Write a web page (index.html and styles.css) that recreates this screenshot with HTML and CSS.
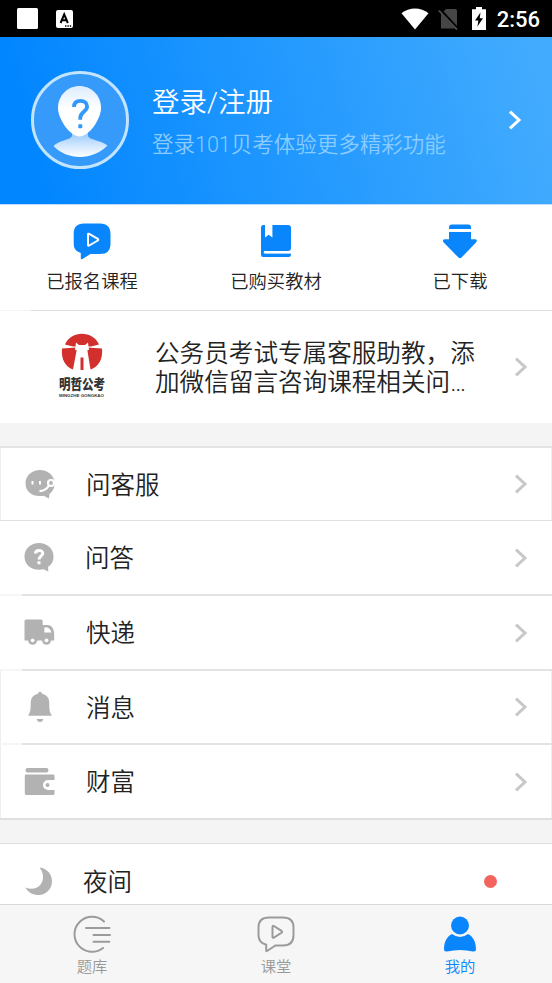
FILE: index.html
```html
<!DOCTYPE html>
<html lang="zh-CN">
<head>
<meta charset="utf-8">
<title>我的</title>
<link rel="stylesheet" href="styles.css">
</head>
<body>
<svg class="defs" aria-hidden="true">
  <symbol id="chevron" viewBox="0 0 14 20"><path d="M2 1.6 11 10 2 18.4" fill="none" stroke="currentColor" stroke-width="3"/></symbol>
</svg>
<div class="app">
  <div class="status">
    <svg class="st-square" viewBox="0 0 21 21"><rect width="21" height="21" rx="1.5" fill="#fff"/></svg>
    <svg class="st-input" viewBox="0 0 17 18"><rect width="17" height="18" rx="2" fill="#fff"/><path d="M4.6 13 8.2 4.4 11.8 13M6 10.2h4.6" fill="none" stroke="#000" stroke-width="2"/><path d="M9 16h1.4M11.4 16h1.4M13.8 16h1.4" stroke="#000" stroke-width="1.3"/></svg>
    <span class="spacer"></span>
    <svg class="st-wifi" viewBox="0 0 28 22"><path d="M14 21.6.5 5.2C8-1.2 20-1.2 27.500 5.200z" fill="#fff"/></svg>
    <svg class="st-sim" viewBox="0 0 20 22"><path d="M8 1h9.500q1.500 0 1.500 1.500v18H3V6z" fill="#464646"/><path d="M1 1 20 21.500" stroke="#000" stroke-width="3.500"/><path d="M.8 2.500 19 21.500" stroke="#505050" stroke-width="1.800"/></svg>
    <svg class="st-battery" viewBox="0 0 14 23"><path d="M4 0h6v2.300h4V23H0V2.300h4z" fill="#fff"/><path d="M8.500 5.500 3 13.500h3.400L5.400 19.500 11 11.300H7.700z" fill="#000"/></svg>
    <span class="time">2:56</span>
  </div>

  <header class="profile">
    <svg class="avatar" viewBox="0 0 98 98">
      <defs>
        <linearGradient id="face" x1="0" y1="0" x2="0" y2="1"><stop offset="0" stop-color="#dcedff"/><stop offset=".45" stop-color="#fff"/><stop offset="1" stop-color="#fff"/></linearGradient>
        <linearGradient id="torso" x1="0" y1="0" x2="0" y2="1"><stop offset="0" stop-color="#8fc5fc"/><stop offset=".45" stop-color="#c5e1fe"/><stop offset="1" stop-color="#fff"/></linearGradient>
      </defs>
      <circle cx="49" cy="49" r="47.500" fill="#359af9" stroke="#c2e4fe" stroke-width="3"/>
      <path d="M41 60v5c-1 4-13 4-18.500 10C29 82 39 86 49 86s20-4 27.500-11.500C70 69 58 69 57 65v-5z" fill="url(#torso)"/>
      <path d="M48.500 15C37 15 27 24 27 37c0 11 12 28.500 21.500 28.500S70 48 70 37c0-13-10-22-21.500-22z" fill="url(#face)"/>
      <path d="M43 36c0-4 2.500-6.200 6.500-6.200s6.600 2.400 6.600 5.800c0 5.200-6.800 5.200-6.800 11v2.200" fill="none" stroke="#3399f8" stroke-width="3.800"/>
      <rect x="47.300" y="53.300" width="4" height="4" rx=".8" fill="#3399f8"/>
    </svg>
    <div class="who">
      <div class="login">登录/注册</div>
      <div class="hint">登录101贝考体验更多精彩功能</div>
    </div>
    <svg class="chev chev-light"><use href="#chevron"/></svg>
  </header>

  <nav class="actions">
    <div class="action">
      <svg viewBox="0 0 38 38"><path d="M11 1.500h16c7 0 10.500 3.500 10.500 10.500v9.500C37.500 29 34 32 27 32H17.500L9 37.200q-1.200.5-1.200-.8V31C3 29.500.7 26.500.7 21.500V12C.7 5 4 1.500 11 1.500z" fill="#0a86fc"/><path d="M15 12.500v10.400q0 1.300 1.200.6l8.600-5q1-.8 0-1.600l-8.600-5q-1.200-.6-1.200.6z" fill="none" stroke="#fff" stroke-width="2"/></svg>
      <span>已报名课程</span>
    </div>
    <div class="action">
      <svg viewBox="0 0 38 38"><path d="M6 3h2v12.500l3.700-2.700 3.700 2.700V3H31q3 0 3 3v20q0 3-3 3H7.500v2.300H34v1q0 2.700-2.200 2.700H6q-2 0-2-2.500V5.500Q4 3 6 3z" fill="#0a86fc"/><path d="M8 30.300h26" stroke="#fff" stroke-width="2.400" stroke-linecap="round"/></svg>
      <span>已购买教材</span>
    </div>
    <div class="action">
      <svg viewBox="0 0 38 38"><path d="M8 7V5.500Q8 2.500 11 2.500h16.500q2.500 0 2.500 3V7zM8 10h22v7.200h4.500q2.500.8.500 3.200L20.500 35.600q-1.500 1.200-3 0L2.700 20.500q-2-2.500.8-3.300H8z" fill="#0a86fc"/></svg>
      <span>已下载</span>
    </div>
  </nav>

  <section class="promo">
    <svg class="logo" viewBox="0 0 50 66">
      <path d="M8 11.500C14-3 36-3 42 11.500L34 13.500H16zM5 15.500l14.500-1v3.500L16 36.500C8 33.500 4 26 5 15.500zM30.500 14.500l14.500 1c1 10.500-3 18-11.500 21L30.500 18z" fill="#d3302d"/>
      <path d="M19 9.500 22 12h6l3-2.500 1 7.500H18z" fill="#fff"/>
      <path d="M23.500 24.500h3V37h-3z" fill="#d3302d"/>
      <text x="2" y="56.300" class="logo-name" textLength="46" lengthAdjust="spacingAndGlyphs">明哲公考</text>
      <text x="2" y="64.300" class="logo-latin" textLength="45" lengthAdjust="spacingAndGlyphs">MINGZHE GONGKAO</text>
    </svg>
    <p>公务员考试专属客服助教，添<br>加微信留言咨询课程相关问…</p>
    <svg class="chev"><use href="#chevron"/></svg>
  </section>

  <div class="gap"></div>

  <main class="menu">
    <div class="row edged">
      <svg class="icon" viewBox="-1 0 32 32"><path d="M15 2c8 0 14.500 5.500 14.500 13.500 0 5-2 8-5 10.500l-.5 4.600-5.500-2.800C8 29.500.5 24 .5 15.500.5 7.500 7 2 15 2z" fill="#b2b2b2"/><path d="M7.500 13v3.500M15 13v3.500" stroke="#fff" stroke-width="2"/><circle cx="26" cy="15" r="3" fill="#b2b2b2" stroke="#fff" stroke-width="2.200"/><path d="M24 17.500q-3.500 5.500-9.500 5.500" fill="none" stroke="#fff" stroke-width="2.300"/></svg>
      <span class="label">问客服</span><svg class="chev"><use href="#chevron"/></svg>
    </div>
    <div class="row inset nudge">
      <svg class="icon" viewBox="0 0 32 32"><path d="M15 1c8 0 14.500 5.500 14.500 13.500 0 5-2 8-5.500 10.500l.3 4.600-4.800-2.300C8 29.500.5 23 .5 14.500.5 6.500 7 1 15 1z" fill="#b2b2b2"/><path d="M11.500 11.500C11.500 7.500 18.800 7.500 18.800 11.200c0 3-3.800 3-3.800 6.300M15 19.200v3" fill="none" stroke="#fff" stroke-width="3"/></svg>
      <span class="label">问答</span><svg class="chev"><use href="#chevron"/></svg>
    </div>
    <div class="row inset2">
      <svg class="icon" viewBox="0 0 32 32"><path d="M2 2.500h15q1.700 0 1.700 1.700V8h5c4.300 0 6.500 4.500 6.500 9v6.500H.5V4Q.5 2.500 2 2.500z" fill="#b2b2b2"/><path d="M20.300 10.500h3.500q3 1.300 3.600 5h-7.100z" fill="#fff"/><circle cx="8.600" cy="23.300" r="4.500" fill="#b2b2b2"/><circle cx="22.500" cy="23.300" r="4.500" fill="#b2b2b2"/><circle cx="8.600" cy="23.300" r="1.900" fill="#fff"/><circle cx="22.500" cy="23.300" r="1.900" fill="#fff"/></svg>
      <span class="label">快递</span><svg class="chev"><use href="#chevron"/></svg>
    </div>
    <div class="row inset edged">
      <svg class="icon" viewBox="0 0 32 32"><path d="M14 2.700q0-2 2-2t2 2c5 1.200 7.300 4.500 7.300 9.500 0 6 .2 8.500 2.200 11.600v1h-23v-1c2-3 2.200-5.600 2.200-11.600 0-5 2.300-8.300 7.300-9.500zM12.700 28h6.600q-.6 3-3.300 3t-3.300-3z" fill="#b2b2b2"/></svg>
      <span class="label">消息</span><svg class="chev"><use href="#chevron"/></svg>
    </div>
    <div class="row last edged">
      <svg class="icon" viewBox="0 0 32 32"><path d="M3.500 2h19q2 0 2 2.200t-2 2.200h-19q-2 0-2-2.200t2-2.200zM2 8.500h27q1.500 0 1.500 1.300V14H24a5 5 0 0 0 0 10h6.500v3.500q0 1.500-1.500 1.500H2.300q-1.500 0-1.500-1.500V9.500q0-1 1.200-1z" fill="#b2b2b2"/><circle cx="23.500" cy="19" r="2" fill="#b2b2b2"/></svg>
      <span class="label">财富</span><svg class="chev"><use href="#chevron"/></svg>
    </div>
    <div class="gap gap-small"></div>
    <div class="row night">
      <svg class="icon" viewBox="0 0 32 32"><path d="M15.500 1.500C23 2.500 28 8 28 15.500 28 23 22 29 14.500 29 9 29 4 26.500 1.500 21.500 7 24 13 23 16.500 18.500c3.700-4.500 3.500-11.500-1-17z" fill="#b2b2b2"/></svg>
      <span class="label">夜间</span><i class="dot"></i>
    </div>
  </main>

  <nav class="tabs">
    <div class="tab">
      <svg viewBox="0 0 38 38"><path d="M31 6.600A17.500 17.500 0 1 0 30 33M13 13h23.500M20.500 20H37M20.500 26.700h15.800" fill="none" stroke="#9b9b9b" stroke-width="2" stroke-linecap="round"/></svg>
      <span>题库</span>
    </div>
    <div class="tab">
      <svg viewBox="0 0 38 38"><path d="M12 2.500h14c7 0 10.500 3.500 10.500 10v7.500c0 7-3.500 10.500-10.500 10.500h-7.500L10 36q-.8.500-.8-.6v-5.600C4.500 28.500 1.500 25.500 1.500 20v-7.500c0-6.500 3.500-10 10.500-10zM15.500 11.800v9.900q0 1.700 1.400.9l7.600-4.800q1.200-.9 0-1.900l-7.600-4.900q-1.400-.8-1.400.8z" fill="none" stroke="#9b9b9b" stroke-width="2"/></svg>
      <span>课堂</span>
    </div>
    <div class="tab current">
      <svg viewBox="0 0 38 38"><circle cx="19" cy="10.500" r="9" fill="#0a86fc"/><path d="M11 19q8 6 16 0c5 2.500 8 7.500 8 15.500q0 2.500-3 2-13-3-26 0-3 .5-3-2C3 26.500 6 21.500 11 19z" fill="#0a86fc"/></svg>
      <span>我的</span>
    </div>
  </nav>
</div>
</body>
</html>
```

FILE: styles.css
```css
* { box-sizing: border-box; }
body {
  margin: 0;
  font-family: Roboto, "Noto Sans CJK SC", sans-serif;
  font-weight: 350;
  color: #222;
  background: #fff;
}
svg { display: block; flex: none; }
.defs { display: none; }
.app { display: flex; flex-direction: column; height: 983px; overflow: hidden; }

.status {
  flex: none;
  display: flex;
  align-items: center;
  height: 37px;
  padding: 0 12px 0 17px;
  background: #000;
}
.st-square { width: 21px; height: 21px; }
.st-input { width: 17px; height: 18px; margin-left: 18px; }
.spacer { flex: 1; }
.st-wifi { width: 28px; height: 22px; }
.st-sim { width: 20px; height: 22px; margin-left: 9px; }
.st-battery { width: 14px; height: 23px; margin-left: 14px; }
.time { margin-left: 11px; padding-top: 1px; color: #fff; font-size: 22px; font-weight: 500; line-height: 37px; }

.profile {
  flex: none;
  display: flex;
  align-items: center;
  height: 168px;
  padding: 0 30px 1px 31px;
  background: linear-gradient(75deg, #0286ff 8%, #42abfe 96%);
  border-bottom: 1px solid #b9deff;
}
.avatar { width: 98px; height: 98px; }
.who { flex: 1; padding: 7px 0 0 23px; white-space: nowrap; }
.login { height: 42px; line-height: 42px; font-size: 27.500px; color: #fff; }
.hint { height: 42px; line-height: 42px; font-size: 21.500px; color: #8accfe; }
.chev { width: 14px; height: 20px; color: #c8c8c8; }
.chev-light { color: #fff; }

.actions { flex: none; display: grid; grid-template-columns: repeat(3, 1fr); height: 105px; }
.action { display: flex; flex-direction: column; align-items: center; padding-top: 17px; }
.action svg { width: 38px; height: 38px; }
.action span { font-size: 18.300px; line-height: 26px; margin-top: 9px; }

.promo {
  flex: none;
  display: flex;
  align-items: center;
  height: 113px;
  padding-right: 24px;
  border-top: 1px solid;
  border-image: linear-gradient(90deg, #f5f5f5 32px, #dedede 32px) 1;
}
.logo { width: 50px; height: 66px; margin-left: 57px; margin-top: -3px; overflow: visible; }
.logo-name { font: 900 14px "Noto Sans CJK SC", sans-serif; fill: #333; }
.logo-latin { font: 700 4px "Liberation Sans", sans-serif; fill: #333; }
.promo p { flex: 1; margin: 0 0 0 48px; padding-top: 2px; font-size: 24.600px; line-height: 29px; white-space: nowrap; }

.gap { flex: none; height: 25px; background: #f4f4f4; border-bottom: 2px solid #e3e3e3; }
.gap-small { height: 24px; border-bottom: 1px solid #dedede; }

.menu { flex: 1; min-height: 0; overflow: hidden; }
.row {
  display: flex;
  align-items: center;
  height: 73px;
  padding: 0 24px;
  border-bottom: 1px solid #e0e0e0;
}
.inset, .inset2 {
  height: 75px;
  border-bottom: 2px solid;
  border-image: linear-gradient(90deg, #f6f6f6 23px, #e3e3e3 23px) 1;
}
.inset.edged { height: 74px; }
.last { height: 75px; border-bottom: 2px solid #e0e0e0; }
.edged { box-shadow: inset 1px 0 #eee, inset -1px 0 #eee; }
.night { border: 0; height: 75px; padding-right: 55px; }
.icon { width: 32px; height: 32px; }
.label { flex: 1; margin-left: 30px; padding-top: 3px; font-size: 24.500px; line-height: 36px; }
.nudge .label { margin-left: 29px; }
.night .label { margin-left: 27px; }
.dot { width: 13px; height: 13px; border-radius: 50%; background: #f4645f; }

.tabs {
  flex: none;
  display: grid;
  grid-template-columns: repeat(3, 1fr);
  height: 79px;
  background: #f6f6f6;
  border-top: 1px solid #d9d9d9;
}
.tab { display: flex; flex-direction: column; align-items: center; padding-top: 10px; color: #999; }
.tab svg { width: 38px; height: 38px; }
.tab span { font-size: 15.300px; line-height: 22px; margin-top: 3px; }
.current { color: #0a86fc; }
```
